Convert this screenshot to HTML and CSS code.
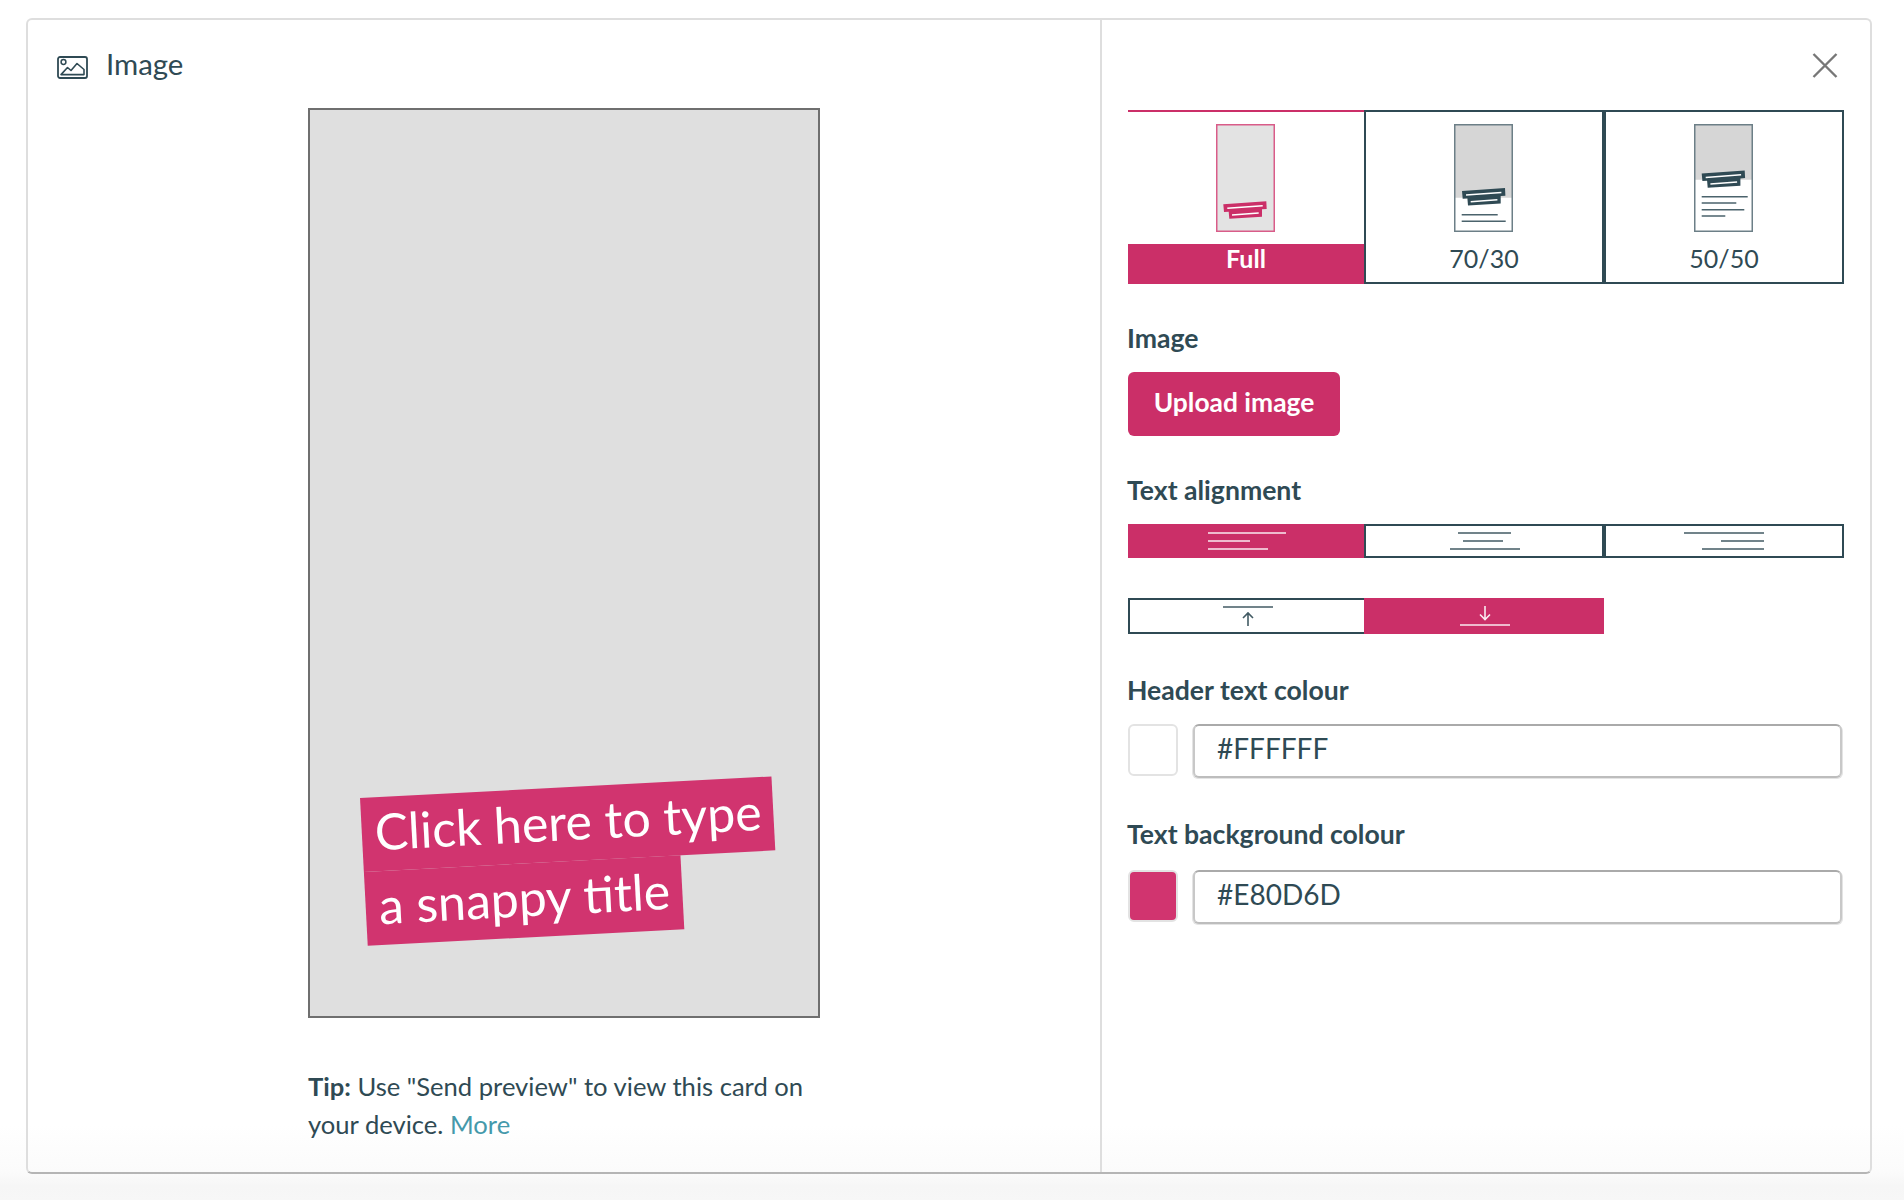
FILE: index.html
```html
<!DOCTYPE html>
<html lang="en">
<head>
<meta charset="utf-8">
<title>Image card</title>
<link rel="stylesheet" href="styles.css">
</head>
<body>
<svg class="defs" width="0" height="0" aria-hidden="true">
  <symbol id="thumb-title" viewBox="0 0 60 20" overflow="visible">
    <path class="title-shape" d="M0 3 L43 0 L43.4 7.7 L38.7 8 L38.7 15.4 L6 17.4 L5.4 10.4 L.7 10.7 Z"/>
    <path class="title-gap" d="M4 7 L39.4 4.4 M8.7 13.7 L35.4 11.7"/>
  </symbol>
</svg>
<main class="card">
  <section class="editor">
    <header class="editor-head">
      <svg class="head-icon" viewBox="0 0 31 23" width="31" height="23">
        <rect x="1" y="1" width="29" height="21" rx="2" fill="none" stroke="currentColor" stroke-width="1.8"/>
        <circle cx="6.5" cy="6" r="2.4" fill="none" stroke="currentColor" stroke-width="1.5"/>
        <path d="M4 18.6 L10.5 11.500 L14 14.500 L20 7.500 L27 13.500 L27 18.6 Z" fill="none" stroke="currentColor" stroke-width="1.6" stroke-linejoin="round"/>
      </svg>
      <h1 class="head-title">Image</h1>
    </header>
    <div class="preview">
      <h2 class="snappy"><span class="snappy-line">Click here to type</span><span class="snappy-line">a snappy title</span></h2>
    </div>
    <p class="tip"><strong>Tip:</strong> Use "Send preview" to view this card on your device. <a class="tip-link" href="#">More</a></p>
  </section>
  <aside class="settings">
    <div class="close-row">
      <svg class="close" viewBox="0 0 26 25" width="26" height="25"><path d="M1.5 1 L24.500 24 M24.500 1 L1.5 24" stroke="currentColor" stroke-width="2.4" fill="none"/></svg>
    </div>

    <div class="tiles">
      <button class="tile tile-active" type="button">
        <svg class="thumb" viewBox="0 0 59 108" width="59" height="108">
          <rect class="thumb-bg" x=".75" y=".75" width="57.5" height="106.5"/>
          <use href="#thumb-title" x="7.3" y="77.3" width="60" height="20"/>
        </svg>
        <span class="tile-label">Full</span>
      </button>
      <button class="tile" type="button">
        <svg class="thumb" viewBox="0 0 59 108" width="59" height="108">
          <rect class="thumb-half" x=".75" y=".75" width="57.5" height="73"/>
          <rect class="thumb-frame" x=".75" y=".75" width="57.5" height="106.5"/>
          <use href="#thumb-title" x="8" y="64" width="60" height="20"/>
          <path class="thumb-lines" d="M7.7 90.7H43.7M7.7 97.3H51.7"/>
        </svg>
        <span class="tile-label">70/30</span>
      </button>
      <button class="tile" type="button">
        <svg class="thumb" viewBox="0 0 59 108" width="59" height="108">
          <rect class="thumb-half" x=".75" y=".75" width="57.5" height="55"/>
          <rect class="thumb-frame" x=".75" y=".75" width="57.5" height="106.5"/>
          <use href="#thumb-title" x="7.7" y="46.4" width="60" height="20"/>
          <path class="thumb-lines" d="M7.7 72.7H53.7M7.7 79H42.3M7.7 85.7H50.3M7.7 92H31.3"/>
        </svg>
        <span class="tile-label">50/50</span>
      </button>
    </div>

    <h3 class="field-label field-label-first">Image</h3>
    <button class="upload" type="button">Upload image</button>

    <h3 class="field-label field-label-align">Text alignment</h3>
    <div class="tiles tiles-short">
      <button class="tile tile-flat tile-active" type="button"><svg class="glyph" viewBox="0 0 80 34" width="80" height="34"><path d="M2 9H80M2 17H44M2 25H62"/></svg></button>
      <button class="tile tile-flat" type="button"><svg class="glyph" viewBox="0 0 80 34" width="80" height="34"><path d="M14 9H67M19 17H59M6 25H76"/></svg></button>
      <button class="tile tile-flat" type="button"><svg class="glyph" viewBox="0 0 80 34" width="80" height="34"><path d="M0 9H80M37 17H80M18 25H80"/></svg></button>
    </div>

    <div class="tiles tiles-two">
      <button class="tile tile-flat tile-top" type="button"><svg class="glyph" viewBox="0 0 52 36" width="52" height="36"><path d="M2 9H52M27 28V15M22 20L27 15L32 20"/></svg></button>
      <button class="tile tile-flat tile-active" type="button"><svg class="glyph" viewBox="0 0 52 36" width="52" height="36"><path d="M2 27H52M27 8V21.500M22 16.500L27 21.500L32 16.500"/></svg></button>
    </div>

    <h3 class="field-label field-label-colour">Header text colour</h3>
    <div class="colour-row">
      <span class="swatch swatch-white"></span>
      <input class="colour-input" type="text" value="#FFFFFF">
    </div>

    <h3 class="field-label">Text background colour</h3>
    <div class="colour-row colour-row-last">
      <span class="swatch swatch-pink"></span>
      <input class="colour-input" type="text" value="#E80D6D">
    </div>
  </aside>
</main>
</body>
</html>
```

FILE: styles.css
```css
* { box-sizing: border-box; }

html, body { margin: 0; height: 1200px; }

body {
  padding: 18px 32px 26px 26px;
  overflow: hidden;
  color: #2f4a54;
  font-family: "Lato", "Liberation Sans", sans-serif;
  background: linear-gradient(to bottom, #fff 0, #fff 1125px, #fbfbfb 1172px, #f6f6f6 1186px, #f7f7f7 1200px);
}

.defs { position: absolute; }

.card {
  display: flex;
  height: 1156px;
  border: 2px solid #dedede;
  border-bottom-color: #b5b5b5;
  border-radius: 6px;
}

/* left */
.editor {
  width: 1074px;
  border-right: 2px solid #dedede;
}

.editor-head {
  display: flex;
  align-items: center;
  gap: 18px;
  height: 88px;
  padding: 0 0 0 29px;
}

.head-icon { margin-top: 6px; flex: none; }

.head-title {
  margin: 0;
  font-size: 29.4px;
  font-weight: 400;
  line-height: 34px;
}

.preview {
  display: flex;
  flex-direction: column;
  justify-content: flex-end;
  width: 512px;
  height: 910px;
  margin-left: 280px;
  padding: 0 0 70px 50px;
  background: #dfdfdf;
  border: 2px solid #6f6f6f;
}

.snappy {
  margin: 0;
  font-size: 50px;
  font-weight: 400;
  line-height: 68px;
  color: #fff;
  transform: rotate(-3deg);
  transform-origin: 0 0;
}

.snappy-line {
  display: block;
  width: fit-content;
  padding: 0 12px 6px 13px;
  background: #d1346f;
  white-space: nowrap;
}

.tip {
  width: 512px;
  margin: 49px 0 0 280px;
  font-size: 25.6px;
  line-height: 38px;
}

.tip-link { color: #4599ab; text-decoration: none; }

/* right */
.settings {
  width: 768px;
  padding-left: 26px;
}

.close-row {
  display: flex;
  justify-content: flex-end;
  height: 90px;
  padding: 33px 32px 0 0;
}

.close { color: #777; }

.tiles {
  display: grid;
  grid-template-columns: 236px 240px 240px;
  width: 716px;
}

.tile {
  display: flex;
  flex-direction: column;
  align-items: center;
  height: 174px;
  margin: 0;
  padding: 12px 0 0;
  background: #fff;
  border: 2px solid #2f4a54;
  color: #2f4a54;
  font: inherit;
}

.tile-active {
  border: 0;
  border-top: 2px solid #cb2f68;
  color: #cb2f68;
}

.thumb { flex: none; margin-left: -2px; }

.thumb-bg { fill: #e3e3e3; stroke: #d95c89; stroke-width: 1.5; }
.thumb-half { fill: #d6d6d6; }
.thumb-frame { fill: none; stroke: #6c7f87; stroke-width: 1.5; }
.thumb-lines { fill: none; stroke: #4b636c; stroke-width: 1.4; }

.title-shape { fill: currentColor; }
.title-gap { fill: none; stroke: #fff; stroke-width: 1.5; }

.tile-label {
  display: flex;
  align-items: center;
  justify-content: center;
  align-self: stretch;
  height: 40px;
  margin-top: 6px;
  font-size: 25px;
}

.tile-active .tile-label {
  height: 40px;
  margin-top: 12px;
  padding-bottom: 12px;
  background: #cb2f68;
  color: #fff;
  font-weight: 700;
}

.tiles-short { margin-top: 19px; }
.tiles-two {
  grid-template-columns: 236px 240px;
  width: 476px;
  margin-top: 40px;
}

.tile-flat {
  justify-content: center;
  height: 34px;
  padding: 0;
}

.tiles-two .tile-flat { height: 36px; }
.tile-top { border-right: 0; }

.tile-flat.tile-active {
  background: #cb2f68;
  border: 0;
  color: #fff;
}

.glyph {
  flex: none;
  fill: none;
  stroke: currentColor;
  stroke-width: 1.6;
  opacity: .9;
}

.field-label {
  margin: 40px 0 0 -1px;
  font-size: 26.6px;
  font-weight: 700;
  line-height: 30px;
}

.field-label-first { margin-top: 39px; }
.field-label-align { margin-top: 39px; }
.field-label-colour { margin-top: 41px; }

.upload {
  display: block;
  width: 212px;
  height: 64px;
  margin: 19px 0 0;
  padding: 0 0 4px;
  background: #cb2f68;
  border: 0;
  border-radius: 6px;
  color: #fff;
  font: 700 26.4px/1 "Lato", "Liberation Sans", sans-serif;
}

.colour-row {
  display: flex;
  align-items: flex-start;
  gap: 15px;
  width: 716px;
  height: 55px;
  margin-top: 19px;
}

.colour-row-last { margin-top: 21px; }

.swatch {
  flex: none;
  width: 50px;
  height: 52px;
  border: 2px solid #e3e3e3;
  border-radius: 6px;
}

.swatch-white { background: #fff; }
.swatch-pink { background: #d1346f; }

.colour-input {
  flex: 1;
  height: 54px;
  margin-right: 2px;
  padding: 0 0 6px 22px;
  background: #fff;
  border: 2px solid #c8c8c8;
  border-top-color: #aaa;
  border-bottom-color: #bdbdbd;
  border-radius: 6px;
  box-shadow: -1px 1px 0 #e4e4e4, 1px 1px 0 #e4e4e4;
  color: #2f4a54;
  font: 400 28px/1 "Lato", "Liberation Sans", sans-serif;
  outline: 0;
}
```
